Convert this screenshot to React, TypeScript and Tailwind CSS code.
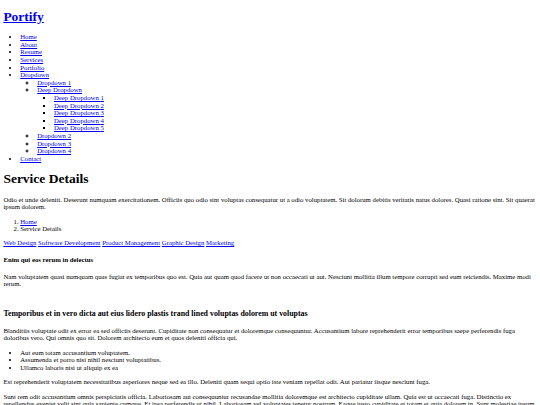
const nav = ["Home", "About", "Resume", "Services", "Portfolio"];
const deep = [1, 2, 3, 4, 5];
const services = ["Web Design", "Software Development", "Product Management", "Graphic Design", "Marketing"];

function A({ children }: { children: React.ReactNode }) {
  return (
    <a href="#" className="text-[#0000ee] underline">
      {children}
    </a>
  );
}

export default function App() {
  return (
    <div className="bg-white text-black [zoom:0.421875] w-[1280px] min-h-[960px] font-['Liberation_Serif','Times_New_Roman',serif] text-[16px] leading-[18px]">
      <div className="mx-2 flow-root">
        {/* header */}
        <h1 className="text-[32px] leading-[36px] font-bold my-[21.44px]">
          <A>Portify</A>
        </h1>
        <ul className="list-disc pl-10 my-4">
          {nav.map((n) => (
            <li key={n}>
              <A>{n}</A>
            </li>
          ))}
          <li>
            <A>Dropdown</A>
            <ul className="list-[circle] pl-10">
              <li>
                <A>Dropdown 1</A>
              </li>
              <li>
                <A>Deep Dropdown</A>
                <ul className="list-[square] pl-10">
                  {deep.map((d) => (
                    <li key={d}>
                      <A>Deep Dropdown {d}</A>
                    </li>
                  ))}
                </ul>
              </li>
              <li>
                <A>Dropdown 2</A>
              </li>
              <li>
                <A>Dropdown 3</A>
              </li>
              <li>
                <A>Dropdown 4</A>
              </li>
            </ul>
          </li>
          <li>
            <A>Contact</A>
          </li>
        </ul>

        {/* page title */}
        <h1 className="text-[32px] leading-[36px] font-bold my-[21.44px]">Service Details</h1>
        <p className="my-4">
          Odio et unde deleniti. Deserunt numquam exercitationem. Officiis quo odio sint voluptas consequatur ut a odio
          voluptatem. Sit dolorum debitis veritatis natus dolores. Quasi ratione sint. Sit quaerat ipsum dolorem.
        </p>
        <ol className="list-decimal pl-10 my-4">
          <li>
            <A>Home</A>
          </li>
          <li>Service Details</li>
        </ol>

        {/* services list */}
        <div className="my-4">
          {services.map((s, i) => (
            <span key={s}>
              <A>{s}</A>
              {i < services.length - 1 ? " " : ""}
            </span>
          ))}
        </div>
        <h4 className="font-bold my-[21.28px]">Enim qui eos rerum in delectus</h4>
        <p className="my-4">
          Nam voluptatem quasi numquam quas fugiat ex temporibus quo est. Quia aut quam quod facere ut non occaecati ut
          aut. Nesciunt mollitia illum tempore corrupti sed eum reiciendis. Maxime modi rerum.
        </p>

        {/* details */}
        <h3 className="text-[18.72px] leading-[21px] font-bold mt-[53px] mb-[18.72px]">
          Temporibus et in vero dicta aut eius lidero plastis trand lined voluptas dolorem ut voluptas
        </h3>
        <p className="my-4">
          Blanditiis voluptate odit ex error ea sed officiis deserunt. Cupiditate non consequatur et doloremque
          consequuntur. Accusantium labore reprehenderit error temporibus saepe perferendis fuga doloribus vero. Qui omnis
          quo sit. Dolorem architecto eum et quos deleniti officia qui.
        </p>
        <ul className="list-disc pl-10 my-4">
          <li>Aut eum totam accusantium voluptatem.</li>
          <li>Assumenda et porro nisi nihil nesciunt voluptatibus.</li>
          <li>Ullamco laboris nisi ut aliquip ex ea</li>
        </ul>
        <p className="my-4">
          Est reprehenderit voluptatem necessitatibus asperiores neque sed ea illo. Deleniti quam sequi optio iste veniam
          repellat odit. Aut pariatur iisque nesciunt fuga.
        </p>
        <p className="my-4">
          Sunt rem odit accusantium omnis perspiciatis officia. Laboriosam aut consequuntur recusandae mollitia
          doloremque est architecto cupiditate ullam. Quia est ut occaecati fuga. Distinctio ex repellendus eveniet velit
          sint quia sapiente cumque. Et ipsa perferendis ut nihil. Laboriosam vel voluptates tenetur nostrum. Eaque iusto
          cupiditate et totam et quia dolorem in. Sunt molestiae ipsum at consequatur vero. Architecto ut pariatur autem
          ad non cumque nesciunt qui maxime. Sunt eum quia impedit dolore alias explicabo ea.
        </p>
      </div>
    </div>
  );
}
